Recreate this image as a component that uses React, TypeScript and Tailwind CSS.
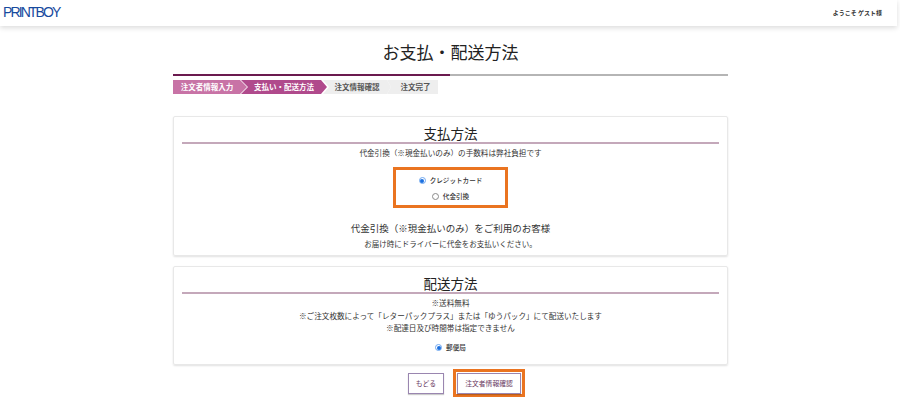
const jp = "font-['Noto_Sans_CJK_JP','Noto_Sans',sans-serif]"

function Step({ label, className }: { label: string; className: string }) {
    return (
        <div className={`h-[14px] flex items-center justify-center text-[7.5px] font-bold ${className}`}>
            {label}
        </div>
    )
}

function Radio({ checked, label }: { checked?: boolean; label: string }) {
    return (
        <div className="flex items-center justify-center gap-[4px] h-[16px]">
            <span className={`w-[7px] h-[7px] rounded-full flex items-center justify-center border ${checked ? 'border-[#6fa8f0] bg-white' : 'border-[#8a8a8a] bg-white'}`}>
                {checked && <span className="w-[4px] h-[4px] rounded-full bg-[#1a6fe0]"></span>}
            </span>
            <span className="text-[6.6px] font-medium text-[#333]">{label}</span>
        </div>
    )
}

function SectionTitle({ children }: { children: string }) {
    return (
        <div className="mx-[8px] border-b-2 border-[#c4a8ba] h-[27px] flex items-end justify-center text-[13.5px] leading-[18px] text-[#222]">
            {children}
        </div>
    )
}

export default function App() {
    return (
        <div className={`w-[900px] h-[400px] overflow-hidden bg-white text-[#222] ${jp}`}>
            <header className="h-[26px] w-[897px] flex items-center justify-between pl-[3px] pr-[15px] pb-[2px] shadow-[0_2px_5px_rgba(0,0,0,0.14)]">
                <span className="font-['Liberation_Sans',sans-serif] text-[14px] leading-none tracking-[-1.9px] text-[#174a9e]">PRINTBOY</span>
                <span className="text-[6px] font-bold text-[#333]">ようこそ ゲスト様</span>
            </header>

            <main className="w-[555px] ml-[173px]">
                <h1 className="text-[17px] leading-[26px] mt-[13px] text-center text-[#222]">お支払・配送方法</h1>

                <div className="mt-[9px] flex h-[2px]">
                    <div className="w-[277px] bg-[#6b1a4f]"></div>
                    <div className="flex-1 bg-[#b5b5b5]"></div>
                </div>

                <div className="mt-[4px] flex">
                    <Step label="注文者情報入力" className="w-[74px] pr-[6px] bg-[#c873a6] text-white [clip-path:polygon(0_0,calc(100%-7px)_0,100%_50%,calc(100%-7px)_100%,0_100%)]" />
                    <Step label="支払い・配送方法" className="w-[86px] -ml-[6px] bg-[#b04a8c] text-white [clip-path:polygon(0_0,calc(100%-6px)_0,100%_50%,calc(100%-6px)_100%,0_100%,7px_50%)]" />
                    <Step label="注文情報確認" className="w-[68px] -ml-[4px] bg-[#eeeeee] text-[#555] [clip-path:polygon(0_0,calc(100%-4px)_0,100%_50%,calc(100%-4px)_100%,0_100%,6px_50%)]" />
                    <Step label="注文完了" className="w-[51px] -ml-[4px] pl-[6px] bg-[#eeeeee] text-[#555] [clip-path:polygon(0_0,100%_0,100%_100%,0_100%,4px_50%)]" />
                </div>

                <section className="mt-[22px] h-[140px] border border-[#e8e8e8] rounded-[2px] shadow-[0_1px_2px_rgba(0,0,0,0.12)]">
                    <SectionTitle>支払方法</SectionTitle>
                    <p className="text-[7.6px] leading-[18px] text-center text-[#333]">代金引換（※現金払いのみ）の手数料は弊社負担です</p>
                    <div className="mt-[5px] mx-auto w-[115px] h-[41px] border-[3px] border-[#ea7420] flex flex-col justify-center pt-[2px]">
                        <Radio checked label="クレジットカード" />
                        <Radio label="代金引換" />
                    </div>
                    <p className="mt-[11px] text-[9.5px] leading-[18px] text-center text-[#333]">代金引換（※現金払いのみ）をご利用のお客様</p>
                    <p className="text-[7.5px] leading-[14px] text-center text-[#333]">お届け時にドライバーに代金をお支払いください。</p>
                </section>

                <section className="mt-[10px] h-[99px] border border-[#e8e8e8] rounded-[2px] shadow-[0_1px_2px_rgba(0,0,0,0.12)]">
                    <SectionTitle>配送方法</SectionTitle>
                    <div className="text-[7.6px] leading-[12.5px] text-center text-[#333] mt-[3px]">
                        <p>※送料無料</p>
                        <p>※ご注文枚数によって「レターパックプラス」または「ゆうパック」にて配送いたします</p>
                        <p>※配達日及び時間帯は指定できません</p>
                    </div>
                    <div className="mt-[5px]">
                        <Radio checked label="郵便局" />
                    </div>
                </section>

                <div className="mt-[4px] ml-[235px] flex items-center gap-[9px]">
                    <button className="w-[36px] h-[21px] border border-[#9a86b0] shadow-[0_1px_1px_rgba(0,0,0,0.2)] text-[6.8px] text-[#6b3a63] flex items-center justify-center">もどる</button>
                    <div className="w-[72px] h-[28px] border-[3px] border-[#ea7420] flex items-center justify-center">
                        <button className="w-[64px] h-[21px] border border-[#9a86b0] shadow-[0_1px_1px_rgba(0,0,0,0.2)] text-[6.8px] text-[#6b3a63] flex items-center justify-center">注文者情報確認</button>
                    </div>
                </div>
            </main>
        </div>
    )
}
